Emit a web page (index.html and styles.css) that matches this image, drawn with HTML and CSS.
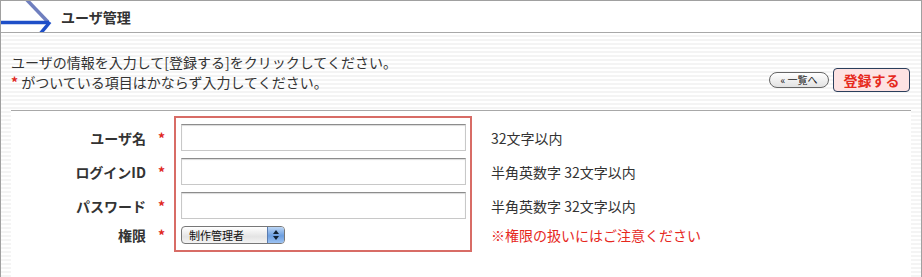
FILE: index.html
```html
<!DOCTYPE html>
<html lang="ja">
  <head>
    <meta charset="UTF-8" />
    <title>ユーザ管理</title>
    <link rel="stylesheet" href="styles.css">
  </head>
  <body>
    <div class="page">
      <div class="header">
        <svg class="header-arrow" width="55" height="31" viewBox="0 0 55 31">
          <line x1="25" y1="-2" x2="47" y2="21" stroke="#6f7fbf" stroke-width="3.5" />
          <line x1="0" y1="21.5" x2="48" y2="21.5" stroke="#1e4fc8" stroke-width="3.5" />
          <line x1="49" y1="21" x2="39" y2="33" stroke="#1e4fc8" stroke-width="3.5" />
        </svg>
        <h1>ユーザ管理</h1>
      </div>

      <div class="intro">
        <div class="intro-text">
          <p>ユーザの情報を入力して[登録する]をクリックしてください。</p>
          <p><span class="req">*</span> がついている項目はかならず入力してください。</p>
        </div>
        <div class="actions">
          <button class="back-button">« 一覧へ</button>
          <button class="submit-button">登録する</button>
        </div>
      </div>

      <div class="panel">
        <div class="form">
          <div class="labels">
            <div class="row">ユーザ名</div>
            <div class="row">ログインID</div>
            <div class="row">パスワード</div>
            <div class="row short">権限</div>
          </div>
          <div class="stars">
            <div class="row">*</div>
            <div class="row">*</div>
            <div class="row">*</div>
            <div class="row short">*</div>
          </div>
          <div class="fields">
            <input class="text-input" type="text" />
            <input class="text-input" type="text" />
            <input class="text-input" type="password" />
            <div class="select">
              <span class="select-value">制作管理者</span>
              <span class="select-arrows">
                <svg width="8" height="12" viewBox="0 0 8 12">
                  <path d="M4 1 L7 5 L1 5 Z" fill="#123" />
                  <path d="M4 11 L7 7 L1 7 Z" fill="#123" />
                </svg>
              </span>
            </div>
          </div>
          <div class="notes">
            <div class="row">32文字以内</div>
            <div class="row">半角英数字 32文字以内</div>
            <div class="row">半角英数字 32文字以内</div>
            <div class="row short warn">※権限の扱いにはご注意ください</div>
          </div>
        </div>
      </div>
    </div>
  </body>
</html>
```

FILE: styles.css
```css
html, body {
  height: 100%;
  margin: 0;
  padding: 0;
}
body {
  font-family: "Noto Sans CJK JP", "Liberation Sans", sans-serif;
  font-size: 14px;
  color: #333;
  background-color: #fff;
}
.page {
  height: 100%;
  box-sizing: border-box;
  border: 1px solid #a0a0a0;
  border-bottom: none;
  display: flex;
  flex-direction: column;
  background: repeating-linear-gradient(to bottom, #fff 0, #fff 2px, #f4f4f4 2px, #f4f4f4 4px);
}
.header {
  height: 31px;
  background-color: #fff;
  border-bottom: 1px solid #a8a8a8;
  display: flex;
  align-items: center;
  overflow: hidden;
}
.header-arrow {
  flex-shrink: 0;
  margin-right: 5px;
}
.header h1 {
  margin: 0;
  font-size: 14px;
  font-weight: bold;
  color: #333;
}
.intro {
  display: flex;
  justify-content: space-between;
  align-items: flex-end;
  padding: 19px 11px 18px 10px;
}
.intro-text p {
  margin: 0;
  line-height: 20px;
}
.req {
  color: #e0281e;
  font-weight: bold;
}
.actions {
  display: flex;
  align-items: center;
  gap: 4px;
}
.back-button {
  height: 16px;
  width: 60px;
  padding: 0;
  border: 1px solid #666;
  border-radius: 8px;
  background: linear-gradient(#fff, #e2e2e2);
  font-family: inherit;
  font-size: 10px;
  line-height: 14px;
  color: #222;
}
.submit-button {
  height: 24px;
  width: 77px;
  padding: 0;
  border: 1px solid #2b3f5c;
  border-radius: 4px;
  background-color: #fde2e2;
  color: #e62a1e;
  font-family: inherit;
  font-size: 14px;
  font-weight: bold;
}
.panel {
  flex: 1;
  margin: 0 10px 0 10px;
  background-color: #fff;
  border-top: 1px solid #a8a8a8;
}
.form {
  display: flex;
  padding-top: 5px;
}
.labels, .stars, .notes {
  padding-top: 8px;
  display: flex;
  flex-direction: column;
  gap: 7px;
}
.row {
  height: 27px;
  display: flex;
  align-items: center;
}
.row.short {
  height: 18px;
}
.labels {
  width: 135px;
}
.labels .row {
  justify-content: flex-end;
  font-weight: bold;
  color: #333;
}
.stars {
  width: 28px;
}
.stars .row {
  padding-left: 12px;
  color: #e0281e;
  font-weight: bold;
  font-size: 14px;
}
.fields {
  width: 298px;
  box-sizing: border-box;
  border: 2px solid #d86c66;
  padding: 6px 5px;
  display: flex;
  flex-direction: column;
  gap: 7px;
}
.text-input {
  width: 285px;
  height: 27px;
  box-sizing: border-box;
  margin: 0;
  border: 1px solid #c8c8c8;
  border-top-color: #8c8c8c;
  box-shadow: inset 0 1px 1px rgba(0, 0, 0, 0.15);
  background-color: #fff;
}
.select {
  width: 104px;
  height: 18px;
  box-sizing: border-box;
  display: flex;
  border: 1px solid #777;
  border-radius: 4px;
  overflow: hidden;
  background: linear-gradient(#fff, #e4e4e4 60%, #f4f4f4);
  font-size: 11px;
}
.select-value {
  flex: 1;
  padding-left: 7px;
  line-height: 16px;
  color: #111;
}
.select-arrows {
  width: 16px;
  border-left: 1px solid #5a7cb0;
  background: linear-gradient(#bcd6f5, #6c9ee0 55%, #9cc2f2);
  display: flex;
  align-items: center;
  justify-content: center;
}
.notes {
  margin-left: 19px;
}
.notes .row {
  color: #333;
}
.notes .warn {
  color: #e6281e;
}
```
